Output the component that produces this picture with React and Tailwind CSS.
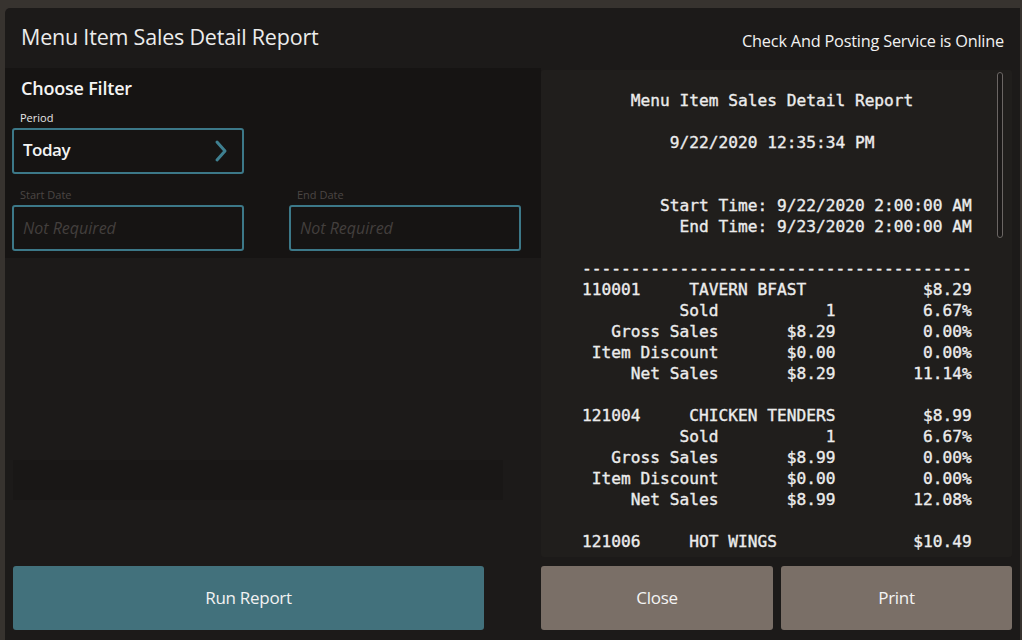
import { useMemo } from 'react';

const UI_FONT = { fontFamily: '"Open Sans", "Noto Sans", sans-serif' };
const MONO_FONT = { fontFamily: '"DejaVu Sans Mono", "Liberation Mono", monospace' };

const items = [
  {
    code: '110001',
    name: 'TAVERN BFAST',
    price: '$8.29',
    rows: [
      ['Sold', '1', '6.67%'],
      ['Gross Sales', '$8.29', '0.00%'],
      ['Item Discount', '$0.00', '0.00%'],
      ['Net Sales', '$8.29', '11.14%'],
    ],
  },
  {
    code: '121004',
    name: 'CHICKEN TENDERS',
    price: '$8.99',
    rows: [
      ['Sold', '1', '6.67%'],
      ['Gross Sales', '$8.99', '0.00%'],
      ['Item Discount', '$0.00', '0.00%'],
      ['Net Sales', '$8.99', '12.08%'],
    ],
  },
  {
    code: '121006',
    name: 'HOT WINGS',
    price: '$10.49',
    rows: [],
  },
];

// build the 40 column receipt text
const buildReport = () => {
  let lines = [];
  lines.push('     Menu Item Sales Detail Report');
  lines.push('');
  lines.push('         9/22/2020 12:35:34 PM');
  lines.push('');
  lines.push('');
  lines.push('        Start Time: 9/22/2020 2:00:00 AM');
  lines.push('          End Time: 9/23/2020 2:00:00 AM');
  lines.push('');
  lines.push('-'.repeat(40));
  items.forEach((item, i) => {
    let head = item.code.padEnd(11) + item.name;
    lines.push(head + item.price.padStart(40 - head.length));
    item.rows.forEach((r) => {
      lines.push(r[0].padStart(14) + r[1].padStart(12) + r[2].padStart(14));
    });
    if (i < items.length - 1) lines.push('');
  });
  return lines.join('\n');
};

const Field = ({ label, labelClass, children, className }) => (
  <div className={className}>
    <p className={`text-[11px] leading-[14px] mb-[3px] pl-[8px] ${labelClass}`}>{label}</p>
    {children}
  </div>
);

const App = () => {
  const report = useMemo(() => buildReport(), []);

  return (
    <div className="w-[1022px] h-[640px] bg-[#37332f] pt-[8px] pl-[5px] overflow-hidden" style={UI_FONT}>
      <div className="w-[1015px] h-[632px] bg-[#1c1a19] rounded-tl-[5px] flex flex-col">
        {/* header */}
        <div className="h-[60px] flex items-center justify-between pl-[16px] pr-[16px] shrink-0">
          <h1 className="text-[21.5px] text-[#ececec] tracking-[-0.2px] mt-[-2px]">
            Menu Item Sales Detail Report
          </h1>
          <span className="text-[16.3px] text-[#f2f2f2] tracking-[-0.2px] mt-[6px]">
            Check And Posting Service is Online
          </span>
        </div>

        <div className="flex-1 flex">
          {/* left side */}
          <div className="w-[536px] flex flex-col">
            <div className="bg-[#161413] h-[190px] pl-[7px] pt-[8px]">
              <h2 className="text-[18px] leading-[24px] font-semibold text-[#f4f4f4] pl-[9px] tracking-[-0.2px]">
                Choose Filter
              </h2>
              <Field label="Period" labelClass="text-[#e6e6e6] mt-[11px]" className="w-[232px]">
                <button className="w-[232px] h-[46px] border-2 border-[#3c7888] rounded-[3px] flex items-center justify-between pl-[9px] pr-[14px]">
                  <span className="text-[17px] font-semibold text-[#f4f4f4] tracking-[-0.5px] mt-[-2px]">Today</span>
                  <svg width="14" height="24" viewBox="0 0 14 24" fill="none">
                    <polyline points="3,3 11,12 3,21" stroke="#3f8091" strokeWidth="3" strokeLinecap="round" strokeLinejoin="round" />
                  </svg>
                </button>
              </Field>
              <div className="flex gap-[45px] mt-[14px]">
                {['Start Date', 'End Date'].map((l) => (
                  <Field key={l} label={l} labelClass="text-[#4b4644]" className="w-[232px]">
                    <div className="w-[232px] h-[46px] border-2 border-[#3c7888] rounded-[3px] flex items-center pl-[9px]">
                      <span className="text-[16px] italic text-[#433f3d]">Not Required</span>
                    </div>
                  </Field>
                ))}
              </div>
            </div>
            <div className="flex-1 flex flex-col pl-[8px] pb-[10px]">
              <div className="flex-1 flex flex-col">
                <div className="h-[202px]" />
                <div className="h-[40px] w-[490px] bg-[#191716]" />
              </div>
              <button className="w-[471px] h-[64px] bg-[#42717c] rounded-[3px] text-[17px] text-[#f2f2f2] tracking-[-0.3px]">
                Run Report
              </button>
            </div>
          </div>

          {/* right side */}
          <div className="w-[471px] flex flex-col pt-[2px] pb-[10px]">
            <div className="relative h-[487px] bg-[#201e1c] rounded-[3px] overflow-hidden pl-[41px] pt-[20px]">
              <pre
                className="text-[16.2px] leading-[21px] text-[#ececec] m-0 [-webkit-text-stroke:0.35px_#ececec]"
                style={MONO_FONT}
              >
                {report}
              </pre>
              <div className="absolute right-[9px] top-[2px] w-[6px] h-[166px] rounded-full border border-[#6b6664] bg-[#1a1817]" />
            </div>
            <div className="flex gap-[8px] mt-[9px]">
              <button className="w-[232px] h-[64px] bg-[#7a6f67] rounded-[3px] text-[17px] text-[#f4f4f4] tracking-[-0.3px]">
                Close
              </button>
              <button className="w-[231px] h-[64px] bg-[#7a6f67] rounded-[3px] text-[17px] text-[#f4f4f4] tracking-[-0.3px]">
                Print
              </button>
            </div>
          </div>
        </div>
      </div>
    </div>
  );
};

export default App;
